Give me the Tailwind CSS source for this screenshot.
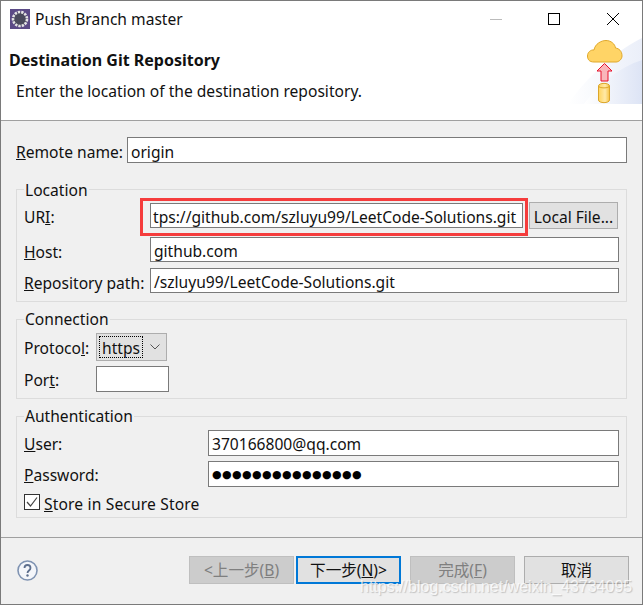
<!DOCTYPE html>
<html lang="en">
<head>
    <meta charset="UTF-8">
    <title>Push Branch master</title>
    <script src="https://cdn.jsdelivr.net/npm/@tailwindcss/browser@4"></script>
</head>
<body class="bg-white">
    <div class="relative w-[643px] h-[605px] flex flex-col border border-[#7a7a7a] overflow-hidden text-[15.6px] leading-[20px] text-[#111] font-['Noto_Sans','Noto_Sans_CJK_SC',sans-serif]">

        <!-- Title bar -->
        <div class="h-[36px] shrink-0 flex items-center pl-[9px] bg-white">
            <svg class="w-5 h-5 shrink-0" viewBox="0 0 20 20">
                <rect width="20" height="20" fill="#5b4a86"/>
                <circle cx="10" cy="10" r="7" fill="#4a4a5c"/>
                <circle cx="10" cy="10" r="7" fill="none" stroke="#e4e4e4" stroke-width="2.600" stroke-dasharray="2.400 1"/>
            </svg>
            <span class="ml-[5px]">Push Branch master</span>
            <div class="ml-auto flex items-center">
                <div class="w-3 h-px bg-[#bbb] mr-[46px]"></div>
                <div class="w-3 h-3 border border-black mr-[47px]"></div>
                <svg class="w-3 h-3 mr-[23px]" viewBox="0 0 12 12"><path d="M0 0L12 12M12 0L0 12" stroke="#000" stroke-width="1"/></svg>
            </div>
        </div>

        <!-- Banner -->
        <div class="h-[84px] shrink-0 flex justify-between bg-white border-b border-[#a0a0a0]">
            <div class="pt-[12px]">
                <h1 class="pl-[8px] text-[16px] font-bold leading-[22px]">Destination Git Repository</h1>
                <p class="pl-[15px] mt-[10px]">Enter the location of the destination repository.</p>
            </div>
            <svg class="w-[74px] h-[66px] mt-px" viewBox="0 0 74 66">
                <defs>
                    <linearGradient id="sky" x1="0" y1="0" x2="1" y2="0">
                        <stop offset="0" stop-color="#fff"/>
                        <stop offset="1" stop-color="#dde4f5"/>
                    </linearGradient>
                    <linearGradient id="can" x1="0" y1="0" x2="1" y2="0">
                        <stop offset="0" stop-color="#ffd45e"/>
                        <stop offset=".6" stop-color="#ffe9a8"/>
                        <stop offset="1" stop-color="#f6c243"/>
                    </linearGradient>
                </defs>
                <path d="M0 66C18 40 46 14 74 0V66Z" fill="url(#sky)" opacity=".6"/>
                <path d="M16 66C30 46 50 30 74 22V66Z" fill="url(#sky)"/>
                <path d="M26 24C21 24 19.500 21 19.500 18C19.500 14 23 11.500 26 12C27 6 33 2.500 38 2.500C43 2.500 47 6 47.500 10C51 10.500 54 13 54 18C54 21 51 24 48 24Z" fill="#ffd466" stroke="#e0a92c"/>
                <path d="M36.500 25.500L44 33H40V43H33V33H29Z" fill="#f9b6ba" stroke="#e8102a"/>
                <path d="M30.500 48C30.500 44.500 41.500 44.500 41.500 48V62C41.500 65.500 30.500 65.500 30.500 62Z" fill="url(#can)" stroke="#dca62a"/>
                <path d="M30.500 48C30.500 50.500 41.500 50.500 41.500 48" fill="none" stroke="#dca62a"/>
            </svg>
        </div>

        <!-- Form -->
        <div class="flex-1 bg-[#f0f0f0] pt-[16px] pl-[15px] pr-[15px]">
            <div class="flex items-center h-[26px]">
                <span class="w-[111px] pt-[3px]"><u>R</u>emote name:</span>
                <div class="w-[500px] h-[26px] bg-white border border-[#7a7a7a] px-[3px] pt-[3px] flex items-center">origin</div>
            </div>

            <fieldset class="mt-[15px] w-[611px] h-[124px] border border-[#dcdcdc] pl-[7px] pr-[7px]">
                <legend class="px-px pt-[2px]">Location</legend>
                <div class="flex items-center h-[26px] mt-[2px]">
                    <span class="w-[126px] pt-[4px]">UR<u>I</u>:</span>
                    <div class="w-[373px] h-[25px] bg-white border border-[#7a7a7a] pl-[2px] pt-[3px] flex items-center overflow-hidden whitespace-nowrap">tps://github.com/szluyu99/LeetCode-Solutions.git</div>
                    <div class="ml-[6px] w-[89px] h-[27px] bg-[#e1e1e1] border border-[#adadad] pt-[4px] flex items-center justify-center whitespace-nowrap">Local File...</div>
                </div>
                <div class="flex items-center h-[25px] mt-[9px]">
                    <span class="w-[126px] pt-[4px]"><u>H</u>ost:</span>
                    <div class="w-[469px] h-[25px] bg-white border border-[#7a7a7a] px-[3px] pt-[3px] flex items-center">github.com</div>
                </div>
                <div class="flex items-center h-[25px] mt-[6px]">
                    <span class="w-[126px] pt-[4px]"><u>R</u>epository path:</span>
                    <div class="w-[469px] h-[25px] bg-white border border-[#7a7a7a] px-[3px] pt-[3px] flex items-center">/szluyu99/LeetCode-Solutions.git</div>
                </div>
            </fieldset>

            <fieldset class="mt-[7px] w-[611px] h-[90px] border border-[#dcdcdc] pl-[7px] pr-[7px]">
                <legend class="px-px">Connection</legend>
                <div class="flex items-center h-[28px] mt-[4px]">
                    <span class="w-[72px] pt-[2px]">Protoco<u>l</u>:</span>
                    <div class="w-[71px] h-[28px] bg-[#e1e1e1] border border-[#adadad] p-[2px] flex items-center">
                        <span class="w-[44px] h-[22px] pt-[2px] outline-1 outline-dotted outline-black -outline-offset-1 flex items-center justify-center">https</span>
                        <svg class="w-[10px] h-[6px] ml-[7px]" viewBox="0 0 10 6"><path d="M0.500 0.500L5 5L9.500 0.500" fill="none" stroke="#555"/></svg>
                    </div>
                </div>
                <div class="flex items-center h-[26px] mt-[5px]">
                    <span class="w-[72px] pt-[2px]">Por<u>t</u>:</span>
                    <div class="w-[73px] h-[26px] bg-white border border-[#7a7a7a]"></div>
                </div>
            </fieldset>

            <fieldset class="mt-[7px] w-[611px] h-[112px] border border-[#dcdcdc] pl-[7px] pr-[7px]">
                <legend class="px-px">Authentication</legend>
                <div class="flex items-center h-[26px] mt-[4px]">
                    <span class="w-[184px] pt-[2px]"><u>U</u>ser:</span>
                    <div class="w-[411px] h-[26px] bg-white border border-[#7a7a7a] px-[3px] pt-[2px] flex items-center">370166800@qq.com</div>
                </div>
                <div class="flex items-center h-[26px] mt-[5px]">
                    <span class="w-[184px] pt-[2px]"><u>P</u>assword:</span>
                    <div class="w-[411px] h-[26px] bg-white border border-[#7a7a7a] px-[3px] pt-[2px] flex items-center font-['DejaVu_Sans'] text-[11px] tracking-[0.4px] text-black">●●●●●●●●●●●●●●●</div>
                </div>
                <div class="flex items-center h-[16px] mt-[7px]">
                    <div class="w-4 h-4 bg-white border border-[#333] flex items-center justify-center">
                        <svg class="w-3 h-3" viewBox="0 0 12 12"><path d="M1 6L4.500 10L11 1.500" fill="none" stroke="#444" stroke-width="1.200"/></svg>
                    </div>
                    <span class="ml-[4px] pt-[3px] tracking-[0.15px]"><u>S</u>tore in Secure Store</span>
                </div>
            </fieldset>
        </div>

        <!-- Footer -->
        <div class="h-[67px] shrink-0 bg-[#f0f0f0] border-t border-[#a0a0a0] flex items-center pl-[16px] pb-[2px]">
            <svg class="w-[21px] h-[21px]" viewBox="0 0 21 21">
                <circle cx="10.500" cy="10.500" r="9.500" fill="#f4f6fa" stroke="#7f93b2" stroke-width="1.600"/>
                <path d="M7.500 8c0-4 6-4 6 0 0 2.500-3 2.500-3 5" fill="none" stroke="#5d6f8e" stroke-width="1.800"/>
                <circle cx="10.500" cy="15.500" r="1.200" fill="#5d6f8e"/>
            </svg>
            <div class="ml-[151px] w-[105px] h-[28px] bg-[#cccccc] border border-[#bfbfbf] text-[#7f7f7f] flex items-center justify-center">&lt;上一步(<u>B</u>)</div>
            <div class="ml-[2px] w-[105px] h-[28px] bg-[#e1e1e1] border-2 border-[#0078d7] flex items-center justify-center">下一步(<u>N</u>)&gt;</div>
            <div class="ml-[9px] w-[105px] h-[28px] bg-[#cccccc] border border-[#bfbfbf] text-[#7f7f7f] flex items-center justify-center">完成(<u>F</u>)</div>
            <div class="ml-[9px] w-[105px] h-[28px] bg-[#e1e1e1] border border-[#adadad] flex items-center justify-center">取消</div>
        </div>

        <!-- Red annotation box over the URI field -->
        <div class="absolute left-[139px] top-[197px] w-[388px] h-[38px] border-[3px] border-[#f53c3c]"></div>

        <!-- Image host watermark -->
        <div class="absolute left-[359px] top-[573px] text-[16px] leading-[26px] whitespace-nowrap text-white/75 [text-shadow:1px_1px_1px_rgba(110,110,110,0.35)] font-['Liberation_Sans',sans-serif]">https://blog.csdn.net/weixin_43734095</div>
    </div>
</body>
</html>
